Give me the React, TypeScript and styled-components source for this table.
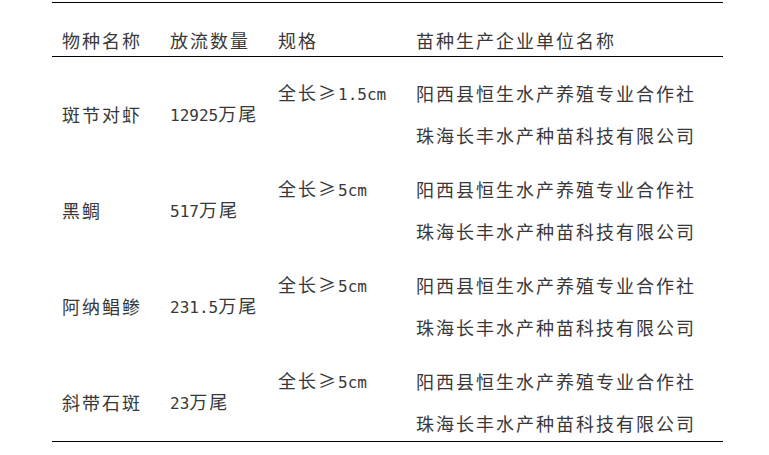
import React from 'react';
import styled, { createGlobalStyle } from 'styled-components';

const GlobalStyle = createGlobalStyle`
  body {
    margin: 0;
    background: #ffffff;
  }
`;

const Page = styled.div`
  padding: 2px 0 0 52px;
  font-family: 'Noto Sans CJK SC', sans-serif;
  font-size: 18px;
  letter-spacing: 2px;
  color: #383838;
`;

const Table = styled.div`
  width: 671px;
  border-top: 1px solid #000;
  border-bottom: 1px solid #000;
`;

const HeaderRow = styled.div`
  display: grid;
  grid-template-columns: 108px 108px 138px 1fr;
  align-items: end;
  box-sizing: border-box;
  height: 54px;
  padding: 0 0 4px 10px;
  border-bottom: 1px solid #000;
  line-height: 24px;
`;

const Row = styled.div`
  display: grid;
  grid-template-columns: 108px 108px 138px 1fr;
  grid-template-rows: 42px 42px;
  box-sizing: border-box;
  height: 96px;
  padding: 15px 0 0 10px;
  line-height: 24px;
`;

const Cell = styled.div<{ $col: number; $row?: number; $span?: boolean }>`
  grid-column: ${p => p.$col};
  grid-row: ${p => (p.$span ? '1 / span 2' : p.$row ?? 1)};
  align-self: center;
  white-space: nowrap;
`;

const Latin = styled.span`
  font-family: 'DejaVu Sans Mono', monospace;
  font-size: 16px;
  letter-spacing: 0;
`;

const Sym = styled.span`
  letter-spacing: 0;
  margin-right: 2px;
`;

interface Species {
  name: string;
  count: string;
  size: string;
}

const species: Species[] = [
  { name: '斑节对虾', count: '12925', size: '1.5cm' },
  { name: '黑鲷', count: '517', size: '5cm' },
  { name: '阿纳鲳鲹', count: '231.5', size: '5cm' },
  { name: '斜带石斑', count: '23', size: '5cm' },
];

const companies = ['阳西县恒生水产养殖专业合作社', '珠海长丰水产种苗科技有限公司'];

export default function App() {
  return (
    <Page>
      <GlobalStyle />
      <Table>
        <HeaderRow>
          <div>物种名称</div>
          <div>放流数量</div>
          <div>规格</div>
          <div>苗种生产企业单位名称</div>
        </HeaderRow>
        {species.map(s => (
          <Row key={s.name}>
            <Cell $col={1} $span>{s.name}</Cell>
            <Cell $col={2} $span>
              <Latin>{s.count}</Latin>万尾
            </Cell>
            <Cell $col={3}>
              全长<Sym>≥</Sym><Latin>{s.size}</Latin>
            </Cell>
            {companies.map((c, i) => (
              <Cell key={c} $col={4} $row={i + 1}>{c}</Cell>
            ))}
          </Row>
        ))}
      </Table>
    </Page>
  );
}
